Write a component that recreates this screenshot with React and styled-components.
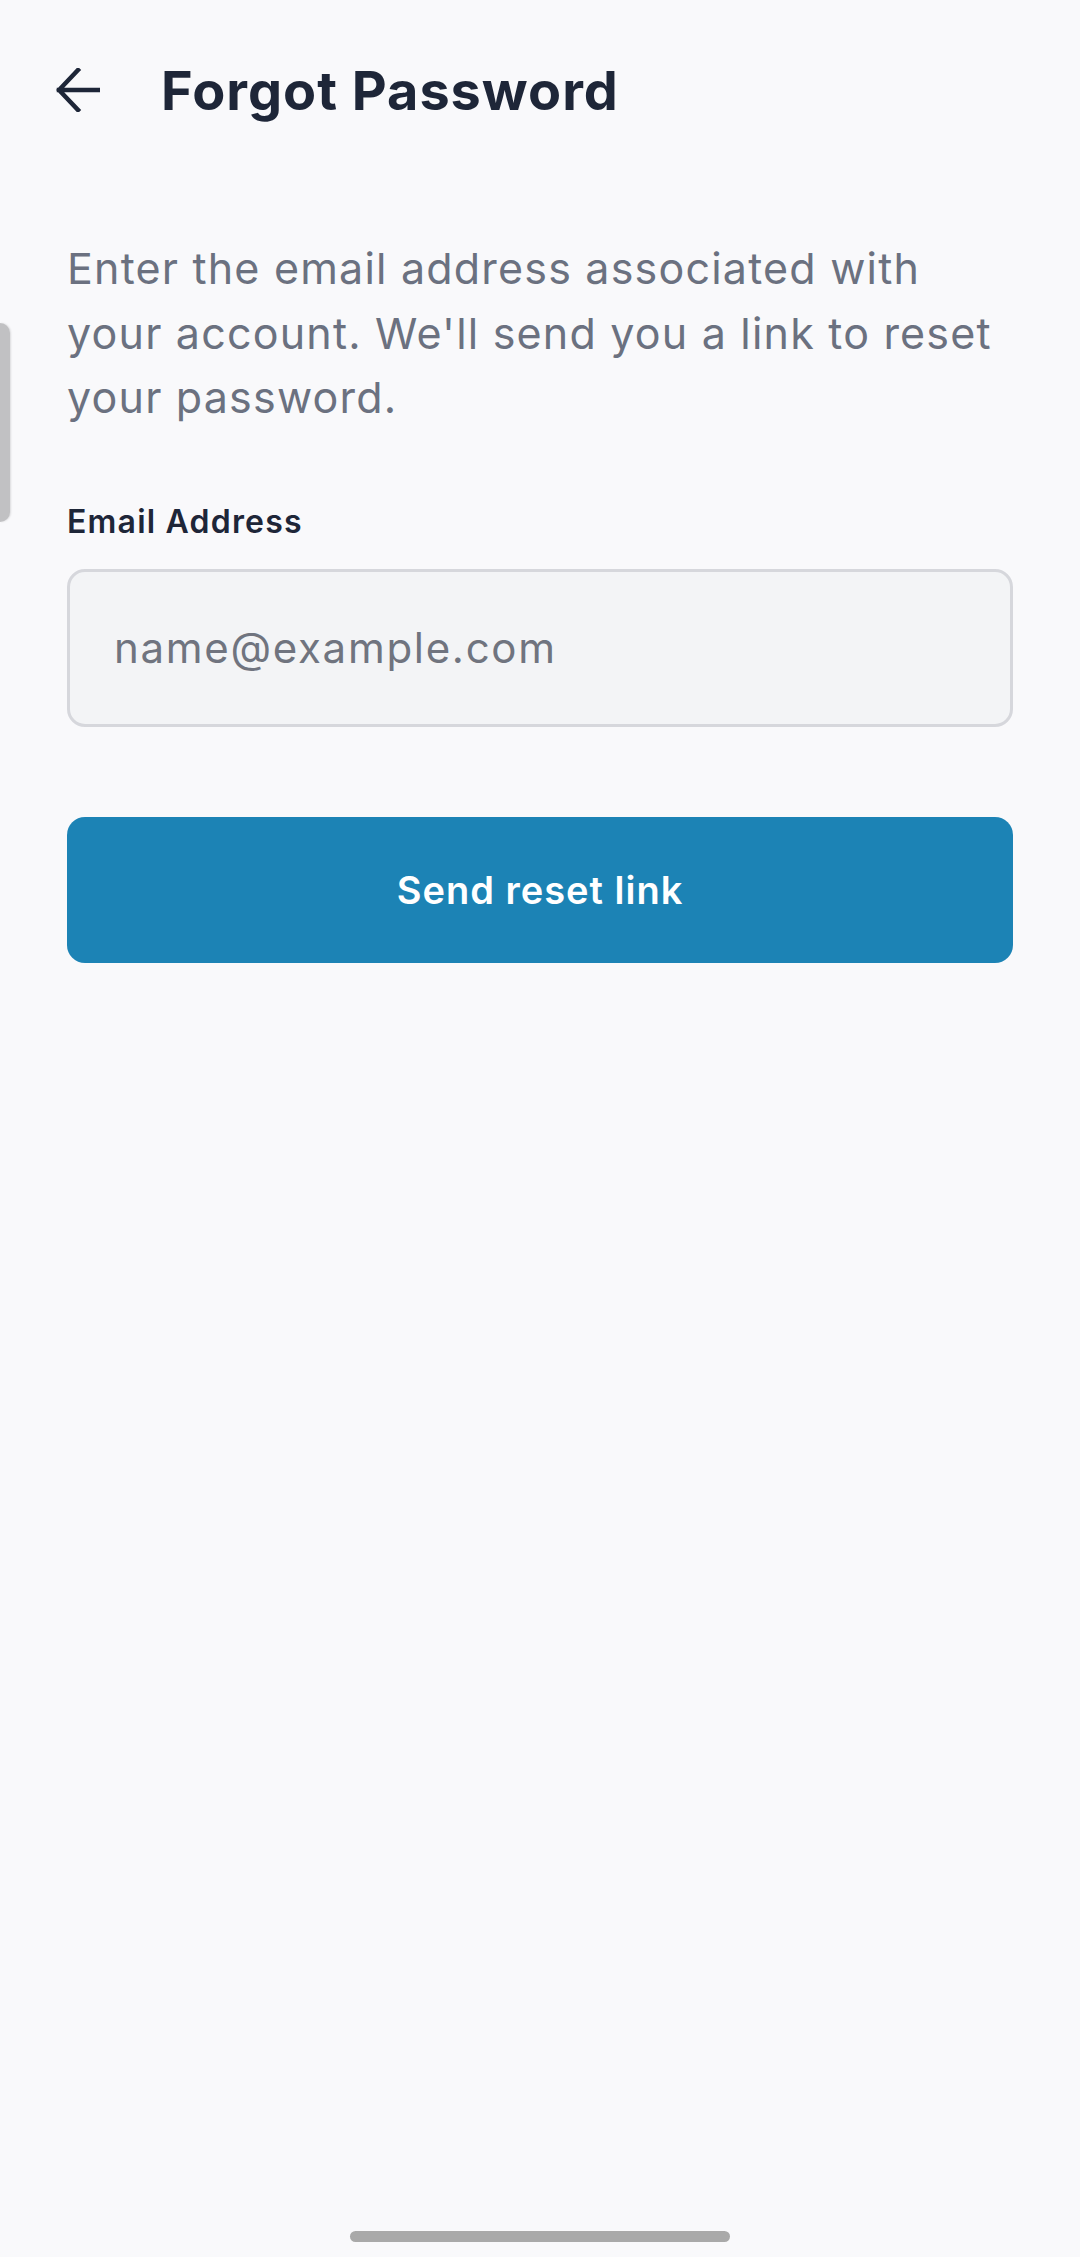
import React from "react";
import styled, { createGlobalStyle } from "styled-components";

const GlobalStyle = createGlobalStyle`
  html, body {
    margin: 0;
    padding: 0;
    background: #f9f9fb;
  }
  body {
    font-family: Inter, "Noto Sans", "Liberation Sans", sans-serif;
    -webkit-font-smoothing: antialiased;
  }
`;

const Screen = styled.div`
  position: relative;
  min-height: 2257px;
  background: #f9f9fb;
  overflow: hidden;
`;

const Header = styled.header`
  display: flex;
  align-items: center;
  height: 180px;
  padding-left: 56px;
  gap: 61px;
`;

const BackButton = styled.button`
  display: flex;
  align-items: center;
  justify-content: center;
  width: 44px;
  height: 44px;
  padding: 0;
  border: none;
  background: transparent;
  color: #1e2638;
  cursor: pointer;
`;

const Title = styled.h1`
  margin: 0;
  font-size: 54px;
  font-weight: 700;
  color: #1e2638;
  letter-spacing: 1px;
`;

const Content = styled.main`
  display: flex;
  flex-direction: column;
  padding: 56px 67px 0;
`;

const Intro = styled.p`
  margin: 0;
  font-size: 43px;
  line-height: 64.5px;
  letter-spacing: 1.2px;
  color: #6b7180;
`;

const Label = styled.label`
  margin-top: 74px;
  font-size: 32px;
  line-height: 36px;
  font-weight: 600;
  letter-spacing: 1.2px;
  color: #1e2638;
`;

const Input = styled.input`
  box-sizing: border-box;
  margin-top: 29px;
  width: 100%;
  height: 158px;
  padding: 0 44px;
  border: 3px solid #d6d7dc;
  border-radius: 18px;
  background: #f3f4f6;
  font-family: inherit;
  font-size: 42px;
  letter-spacing: 1.7px;
  color: #1e2638;
  outline: none;

  &::placeholder {
    color: #70747f;
  }
`;

const SubmitButton = styled.button`
  margin-top: 90px;
  width: 100%;
  height: 146px;
  border: none;
  border-radius: 18px;
  background: #1c83b5;
  color: #ffffff;
  font-family: inherit;
  font-size: 38px;
  font-weight: 600;
  letter-spacing: 1px;
  cursor: pointer;
`;

/* system overlays: edge handle and gesture bar */
const EdgeHandle = styled.div`
  position: absolute;
  left: 0;
  top: 323px;
  width: 10px;
  height: 199px;
  background: #c1c1c3;
  border-radius: 0 10px 10px 0;
  box-shadow: 1px 0 2px rgba(0, 0, 0, 0.12);
`;

const HomeIndicator = styled.div`
  position: absolute;
  left: 350px;
  bottom: 15px;
  width: 380px;
  height: 11px;
  border-radius: 6px;
  background: #a9a9a9;
`;

const ArrowLeft = () => (
  <svg width="44" height="44" viewBox="0 0 44 44" fill="none">
    <path
      d="M42 22H3M22 2L3 22L22 42"
      stroke="currentColor"
      strokeWidth="4.5"
      strokeLinecap="square"
      strokeLinejoin="miter"
    />
  </svg>
);

export default function App() {
  return (
    <Screen>
      <GlobalStyle />
      <Header>
        <BackButton aria-label="Back">
          <ArrowLeft />
        </BackButton>
        <Title>Forgot Password</Title>
      </Header>
      <Content>
        <Intro>
          Enter the email address associated with your account. We'll send you
          a link to reset your password.
        </Intro>
        <Label htmlFor="email">Email Address</Label>
        <Input id="email" type="email" placeholder="name@example.com" />
        <SubmitButton type="button">Send reset link</SubmitButton>
      </Content>
      <EdgeHandle />
      <HomeIndicator />
    </Screen>
  );
}
